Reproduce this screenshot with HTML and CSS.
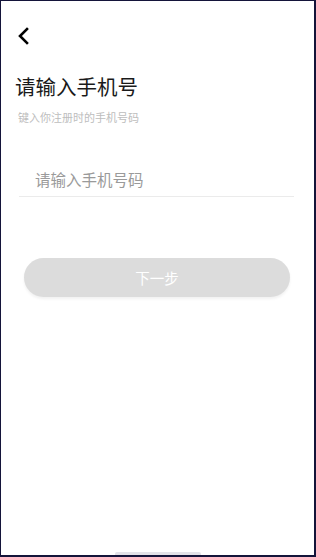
FILE: index.html
```html
<!DOCTYPE html>
<html lang="zh">
<head>
    <meta charset="UTF-8">
    <meta name="viewport" content="width=device-width, initial-scale=1.0">
    <title>登录</title>
    <link rel="stylesheet" href="styles.css">
</head>
<body>
    <div class="screen">
        <div class="nav">
            <svg class="back" width="16" height="20" viewBox="0 0 16 20">
                <path d="M11 3 L4 10 L11 17" fill="none" stroke="#000" stroke-width="2.6" stroke-linecap="square"/>
            </svg>
        </div>
        <h1 class="title">请输入手机号</h1>
        <p class="subtitle">键入你注册时的手机号码</p>
        <div class="field">
            <input type="text" placeholder="请输入手机号码">
        </div>
        <button class="next">下一步</button>
        <div class="home-bar"></div>
    </div>
</body>
</html>
```

FILE: styles.css
```css
body {
    margin: 0;
    padding: 0;
    background: #14143a;
    font-family: "Noto Sans CJK SC", "Noto Sans", sans-serif;
}
.screen {
    position: relative;
    box-sizing: border-box;
    width: 313px;
    height: 554px;
    margin: 1px 0 0 1px;
    background: #ffffff;
    padding: 0 20px 0 14px;
}
.nav {
    height: 27px;
    padding-top: 25px;
    padding-left: 1px;
}
.back {
    display: block;
}
.title {
    margin: 19px 0 0 0;
    font-size: 20.5px;
    font-weight: 400;
    line-height: 28px;
    color: #1a1a1a;
}
.subtitle {
    margin: 10px 0 0 3px;
    font-size: 11px;
    line-height: 15px;
    color: #bdbdbd;
}
.field {
    margin: 41px 0 0 4px;
    border-bottom: 1px solid #ebebeb;
}
.field input {
    box-sizing: border-box;
    width: 100%;
    border: none;
    outline: none;
    padding: 0 0 4px 16px;
    height: 30px;
    font-family: inherit;
    font-size: 15.5px;
    color: #333;
    background: transparent;
}
.field input::placeholder {
    color: #9a9a9a;
}
.next {
    display: block;
    box-sizing: border-box;
    width: 266px;
    height: 39px;
    margin: 61px 0 0 9px;
    border: none;
    border-radius: 20px;
    background: #dcdcdc;
    color: #ffffff;
    font-family: inherit;
    font-size: 14.5px;
    box-shadow: 0 2px 3px rgba(0, 0, 0, 0.06);
}
.home-bar {
    position: absolute;
    left: 114px;
    bottom: 0;
    width: 86px;
    height: 3px;
    border-radius: 2px 2px 0 0;
    background: #e2e2e8;
}
```
